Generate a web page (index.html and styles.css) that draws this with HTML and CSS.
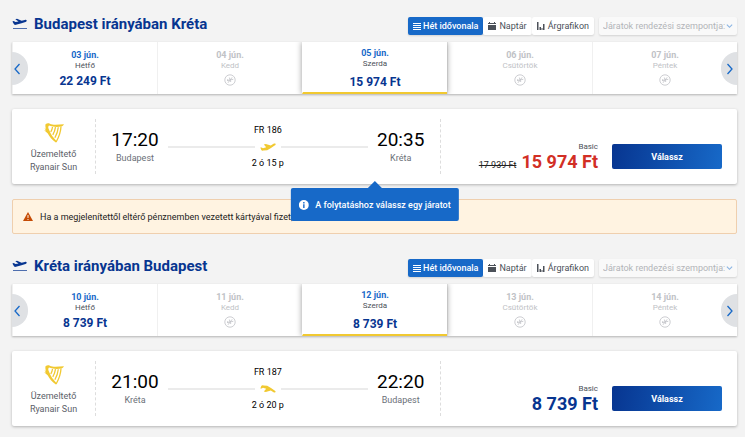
FILE: index.html
```
<!DOCTYPE html>
<html lang="hu">
<head>
<meta charset="utf-8">
<meta name="viewport" content="width=device-width, initial-scale=1">
<title>Járatok kiválasztása</title>
<link rel="stylesheet" href="styles.css">
</head>
<body>
<svg class="defs" aria-hidden="true">
  <symbol id="takeoff" viewBox="0 0 15 12">
    <path d="M.4 3.400l1.300-.3 1.800 1 3-.6L3.300 1.200 5 .8l4.600 1.900 3.200-.8c.9-.2 1.700 0 1.900.5.2.6-.4 1.200-1.200 1.500L9.500 5.200 4 6.800c-.9.200-1.600 0-2-.6z"/>
    <path d="M1 10h14v1H1z" opacity=".7"/>
  </symbol>
  <symbol id="noflight" viewBox="0 0 12 12">
    <circle cx="6" cy="6" r="5.200" fill="none" stroke="currentColor" stroke-width=".8"/>
    <path d="M3 6.500l6.300-1.200M5.300 3.500l1.500 4.500M4 8.800L8.200 3.300M3.500 5.200l.6 2" fill="none" stroke="currentColor" stroke-width=".8"/>
  </symbol>
  <symbol id="plane" viewBox="0 0 16 8">
    <path d="M.3 4.600l1.300-.2 1.400.8 3.200-1L3.800 1.500l2-.6 5 1.600 2.700-1.700c.9-.5 1.900-.5 2.100.1.200.6-.2 1.200-1 1.700L11 5 7.200 7.300 3.500 7.600c-1.200.2-1.900 0-2.200-.6z"/>
  </symbol>
  <symbol id="harp" viewBox="0 0 20 20">
    <path d="M1.500 1.200C3 0 4.700 0 5.800.7 9 2.300 14 1.500 20 1.300c-.6 1.200-1.500 1.900-2.800 2.200C13 4.300 8.500 3.800 5 2.600c-.9.700-.9 2-.4 3.200l2 4.500c1.100 2.500 3 4.700 5.400 7.200l.2 2.200C8 17 5.300 13.500 3.800 10.600L.2 7.200l2 .2-1.700-2 1.400.3C1.300 4 1.300 2.500 1.500 1.200z"/>
    <path d="M17 3.500c-.2 5-1.500 9.500-4.900 15.500M14.300 4.200c-.4 3.800-1.500 7-3.400 10.500M11.500 4.200c-.4 3-1.300 5.200-2.700 7.600M8.500 4c-.2 1.800-.7 3.300-1.700 5" fill="none" stroke="currentColor" stroke-width="1.300"/>
  </symbol>
  <symbol id="prev" viewBox="0 0 8 12"><path d="M6.500 1L2 6l4.500 5" fill="none" stroke="currentColor" stroke-width="1.300"/></symbol>
  <symbol id="next" viewBox="0 0 8 12"><path d="M1.500 1L6 6l-4.500 5" fill="none" stroke="currentColor" stroke-width="1.300"/></symbol>
  <symbol id="down" viewBox="0 0 8 8"><path d="M1 2.500L4 5.500 7 2.500" fill="none" stroke="currentColor" stroke-width="1.300"/></symbol>
  <symbol id="lines" viewBox="0 0 8 8"><path d="M0 1h8v1H0zM0 3h8v1H0zM0 5h8v1H0zM0 7h8v1H0z"/></symbol>
  <symbol id="calendar" viewBox="0 0 8 8"><path d="M0 1h1V0h1v1h4V0h1v1h1v1H0zM0 3h8v5H0z"/></symbol>
  <symbol id="chart" viewBox="0 0 8 8"><path d="M0 0h1.500v8H0zM2.500 5H4v3H2.500zM4.500 6h1v2h-1zM6 2h1.500v6H6z"/></symbol>
</svg>

<main class="page">
  <section class="trip">
    <header class="trip-head">
      <svg class="trip-icon"><use href="#takeoff"/></svg>
      <h2 class="trip-title">Budapest irányában Kréta</h2>
      <div class="views">
        <button class="view view-on" type="button"><svg><use href="#lines"/></svg>Hét idővonala</button>
        <button class="view" type="button"><svg><use href="#calendar"/></svg>Naptár</button>
        <button class="view" type="button"><svg><use href="#chart"/></svg>Árgrafikon</button>
      </div>
      <div class="sort">
        <select aria-label="Járatok rendezési szempontja"><option>Járatok rendezési szempontja:</option></select>
        <svg><use href="#down"/></svg>
      </div>
    </header>
    <div class="week">
      <div class="days">
        <button class="day" type="button"><b class="date">03 jún.</b><span class="name">Hétfő</span><span class="amount">22 249 Ft</span></button>
        <button class="day day-off" type="button"><b class="date">04 jún.</b><span class="name">Kedd</span><svg><use href="#noflight"/></svg></button>
        <button class="day day-on" type="button"><b class="date">05 jún.</b><span class="name">Szerda</span><span class="amount">15 974 Ft</span></button>
        <button class="day day-off" type="button"><b class="date">06 jún.</b><span class="name">Csütörtök</span><svg><use href="#noflight"/></svg></button>
        <button class="day day-off" type="button"><b class="date">07 jún.</b><span class="name">Péntek</span><svg><use href="#noflight"/></svg></button>
      </div>
      <button class="arrow arrow-prev" type="button" aria-label="Előző"><svg><use href="#prev"/></svg></button>
      <button class="arrow arrow-next" type="button" aria-label="Következő"><svg><use href="#next"/></svg></button>
    </div>
    <article class="flight">
      <div class="carrier"><svg><use href="#harp"/></svg><span>Üzemeltető</span><span>Ryanair Sun</span></div>
      <div class="journey">
        <div class="stop"><span class="time">17:20</span><span class="city">Budapest</span></div>
        <div class="leg"><span>FR 186</span><div class="track"><svg><use href="#plane"/></svg></div><span>2 ó 15 p</span></div>
        <div class="stop"><span class="time">20:35</span><span class="city">Kréta</span></div>
      </div>
      <div class="fare">
        <div class="cost"><span class="plan">Basic</span><div class="sums"><s>17 939 Ft</s><strong class="price price-cut">15 974 Ft</strong></div></div>
        <button class="choose" type="button">Válassz</button>
      </div>
      <div class="tip" role="tooltip"><svg viewBox="0 0 10 10"><circle cx="5" cy="5" r="5" fill="#fff"/><path d="M4.300 2h1.400v1.400H4.300zM4.300 4.200h1.400V8H4.300z" fill="#1769c8"/></svg>A folytatáshoz válassz egy járatot</div>
    </article>
    <p class="alert"><svg viewBox="0 0 10 9"><path d="M5 0l5 9H0z"/><path d="M4.500 3h1v3h-1zM4.500 7h1v1h-1z" fill="#fff3e1"/></svg>Ha a megjelenítettől eltérő pénznemben vezetett kártyával fizet, a</p>
  </section>

  <section class="trip">
    <header class="trip-head">
      <svg class="trip-icon"><use href="#takeoff"/></svg>
      <h2 class="trip-title">Kréta irányában Budapest</h2>
      <div class="views">
        <button class="view view-on" type="button"><svg><use href="#lines"/></svg>Hét idővonala</button>
        <button class="view" type="button"><svg><use href="#calendar"/></svg>Naptár</button>
        <button class="view" type="button"><svg><use href="#chart"/></svg>Árgrafikon</button>
      </div>
      <div class="sort">
        <select aria-label="Járatok rendezési szempontja"><option>Járatok rendezési szempontja:</option></select>
        <svg><use href="#down"/></svg>
      </div>
    </header>
    <div class="week">
      <div class="days">
        <button class="day" type="button"><b class="date">10 jún.</b><span class="name">Hétfő</span><span class="amount">8 739 Ft</span></button>
        <button class="day day-off" type="button"><b class="date">11 jún.</b><span class="name">Kedd</span><svg><use href="#noflight"/></svg></button>
        <button class="day day-on" type="button"><b class="date">12 jún.</b><span class="name">Szerda</span><span class="amount">8 739 Ft</span></button>
        <button class="day day-off" type="button"><b class="date">13 jún.</b><span class="name">Csütörtök</span><svg><use href="#noflight"/></svg></button>
        <button class="day day-off" type="button"><b class="date">14 jún.</b><span class="name">Péntek</span><svg><use href="#noflight"/></svg></button>
      </div>
      <button class="arrow arrow-prev" type="button" aria-label="Előző"><svg><use href="#prev"/></svg></button>
      <button class="arrow arrow-next" type="button" aria-label="Következő"><svg><use href="#next"/></svg></button>
    </div>
    <article class="flight">
      <div class="carrier"><svg><use href="#harp"/></svg><span>Üzemeltető</span><span>Ryanair Sun</span></div>
      <div class="journey">
        <div class="stop"><span class="time">21:00</span><span class="city">Kréta</span></div>
        <div class="leg"><span>FR 187</span><div class="track track-back"><svg><use href="#plane"/></svg></div><span>2 ó 20 p</span></div>
        <div class="stop"><span class="time">22:20</span><span class="city">Budapest</span></div>
      </div>
      <div class="fare">
        <div class="cost"><span class="plan">Basic</span><div class="sums"><strong class="price">8 739 Ft</strong></div></div>
        <button class="choose" type="button">Válassz</button>
      </div>
    </article>
  </section>
</main>
</body>
</html>
```
FILE: styles.css
```
* { box-sizing: border-box; }

body {
  margin: 0;
  background: #f3f3f3;
  color: #222;
  font: 9px/12px Roboto, sans-serif;
}

button, select { margin: 0; padding: 0; border: 0; font: inherit; color: inherit; }
svg { display: block; flex: none; fill: currentColor; }
.defs { position: absolute; width: 0; height: 0; }

.page {
  display: flex;
  flex-direction: column;
  gap: 25px;
  padding: 17px 8px 11px 12px;
}

.trip-head { display: flex; align-items: center; height: 18px; margin-bottom: 7px; color: #073590; }
.trip-icon { width: 15px; height: 12px; margin: 0 7px 4px 0; }
.trip-title { flex: 1; margin: 0 0 4px; font-size: 15px; line-height: 18px; font-weight: 700; }

.views { display: flex; margin-right: 5px; }
.view {
  display: flex;
  align-items: center;
  gap: 3px;
  height: 18px;
  padding: 0 5px;
  border-radius: 2px;
  background: #fff;
  box-shadow: 0 1px 2px #0002;
  color: #4c5159;
}
.view svg { width: 8px; height: 8px; }
.view-on { gap: 2px; background: #1769c8; color: #fff; font-weight: 500; }

.sort { display: flex; align-items: center; height: 18px; padding: 0 4px; border-radius: 2px; background: #f9f9f9; box-shadow: 0 1px 2px #0002; color: #b2b4b8; }
.sort select { appearance: none; background: none; opacity: 1; }
.sort svg { width: 7px; height: 8px; color: #8ab4e3; }

.week { position: relative; margin-bottom: 15px; background: #fff; box-shadow: 0 1px 2px #0004; }
.days { display: grid; grid-template-columns: repeat(5, 1fr); overflow: hidden; }
.day {
  display: flex;
  flex-direction: column;
  align-items: center;
  height: 52px;
  padding-top: 7px;
  border-left: 1px solid #f0f0f0;
  background: #fff;
}
.date { font-size: 9px; line-height: 12px; font-weight: 700; color: #1769c8; }
.name { font-size: 8px; line-height: 9px; color: #4c5159; }
.amount { margin-top: 3px; font-size: 12px; line-height: 16px; font-weight: 700; color: #073590; }
.day-off .date, .day-off .name, .day-off svg { color: #c0c2c6; }
.day-off svg { width: 12px; height: 12px; margin-top: 4px; }
.day-on { position: relative; padding-top: 5px; border-left-color: #fff; border-bottom: 2px solid #f1c931; box-shadow: 0 0 6px #0006; }
.day-on .amount { margin-top: 6px; }

.arrow { position: absolute; top: 10px; width: 16px; height: 33px; display: flex; align-items: center; background: #dfe1e4; color: #1769c8; }
.arrow svg { width: 8px; height: 12px; }
.arrow-prev { left: 0; padding-left: 1px; border-radius: 0 16px 16px 0; }
.arrow-next { right: 0; padding-left: 5px; border-radius: 16px 0 0 16px; }

.flight {
  position: relative;
  display: grid;
  grid-template-columns: 83px 7fr 6fr;
  padding: 10px 0;
  border-radius: 2px;
  background: #fff;
  box-shadow: 0 1px 3px #0004;
}
.carrier { display: flex; flex-direction: column; align-items: center; padding-top: 4px; line-height: 13px; color: #5c6169; }
.carrier svg { width: 20px; height: 20px; margin-bottom: 5px; color: #f1c931; }

.journey { display: flex; align-items: flex-start; gap: 9px; height: 55px; padding: 0 15px; border: dashed #ddd; border-width: 0 1px; }
.stop { display: flex; flex-direction: column; align-items: center; width: 48px; padding-top: 9px; }
.time { font-size: 19px; line-height: 23px; color: #000; }
.city { line-height: 15px; color: #6b7078; }
.leg { flex: 1; display: flex; flex-direction: column; align-items: center; padding-top: 5px; color: #000; }
.track { display: flex; align-items: center; gap: 5px; align-self: stretch; height: 21px; color: #f1c931; }
.track::before, .track::after { content: ""; flex: 1; height: 2px; background: #ebebeb; }
.track svg { width: 16px; height: 8px; }
.track-back svg { transform: scaleY(-1); }

.fare { display: flex; justify-content: flex-end; align-items: center; gap: 14px; padding: 20px 15px 0 0; }
.cost { display: flex; flex-direction: column; align-items: flex-end; }
.plan { font-size: 8px; line-height: 11px; color: #4c5159; }
.sums { display: flex; align-items: baseline; gap: 5px; }
.price { font-size: 18px; line-height: 20px; font-weight: 700; color: #073590; }
.price-cut { color: #d22f25; }
.choose { width: 110px; height: 25px; border-radius: 2px; background: linear-gradient(100deg, #073590, #1769c8); color: #fff; font-weight: 700; }

.tip {
  position: absolute;
  z-index: 1;
  top: 79px;
  left: 50%;
  transform: translateX(-50%);
  display: flex;
  align-items: center;
  gap: 7px;
  height: 33px;
  padding: 0 8px;
  border-radius: 2px;
  background: #1769c8;
  color: #fff;
  font-weight: 500;
  white-space: nowrap;
}
.tip::before { content: ""; position: absolute; left: 50%; bottom: 100%; margin-left: -7px; border: solid transparent; border-width: 0 7px 7px; border-bottom-color: #1769c8; }
.tip svg { width: 10px; height: 10px; }

.alert { display: flex; align-items: center; gap: 7px; height: 35px; margin: 15px 0 0; padding: 0 10px; border: 1px solid #efcfae; border-radius: 2px; background: #fff3e1; }
.alert svg { width: 10px; height: 9px; color: #c54b05; }
```
